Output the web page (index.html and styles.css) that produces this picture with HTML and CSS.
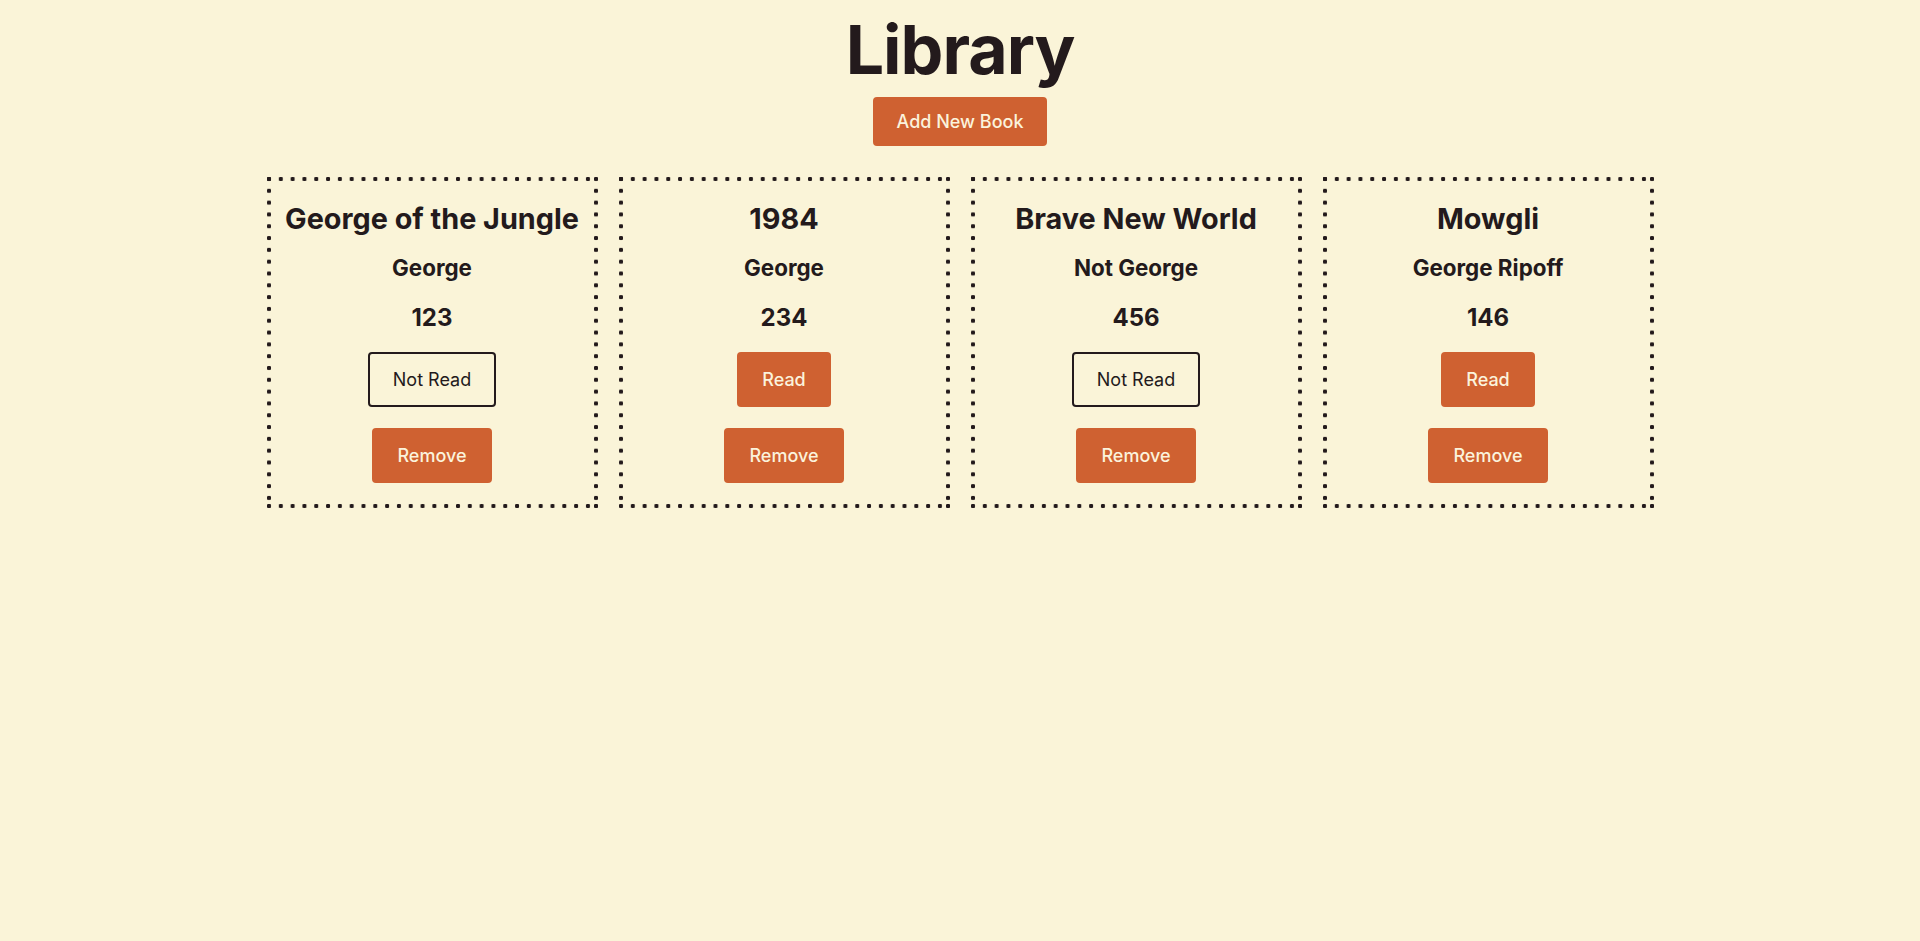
FILE: index.html
```html
<!DOCTYPE html>
<html lang="en">
<head>
<meta charset="utf-8">
<title>Library</title>
<link rel="stylesheet" href="styles.css">
</head>
<body>
<main class="page">
  <h1 class="title">Library</h1>
  <button class="btn btn-add">Add New Book</button>
  <section class="library">
    <article class="card">
      <h2 class="book-title">George of the Jungle</h2>
      <h3 class="book-author">George</h3>
      <p class="book-pages">123</p>
      <button class="btn btn-outline">Not Read</button>
      <button class="btn">Remove</button>
    </article>
    <article class="card">
      <h2 class="book-title">1984</h2>
      <h3 class="book-author">George</h3>
      <p class="book-pages">234</p>
      <button class="btn">Read</button>
      <button class="btn">Remove</button>
    </article>
    <article class="card">
      <h2 class="book-title">Brave New World</h2>
      <h3 class="book-author">Not George</h3>
      <p class="book-pages">456</p>
      <button class="btn btn-outline">Not Read</button>
      <button class="btn">Remove</button>
    </article>
    <article class="card">
      <h2 class="book-title">Mowgli</h2>
      <h3 class="book-author">George Ripoff</h3>
      <p class="book-pages">146</p>
      <button class="btn">Read</button>
      <button class="btn">Remove</button>
    </article>
  </section>
</main>
</body>
</html>
```

FILE: styles.css
```css
html, body {
  margin: 0;
  padding: 0;
  height: 100%;
}

body {
  background: #faf4d8;
  color: #231a1c;
  font-family: Inter, "Noto Sans", sans-serif;
}

.page {
  display: flex;
  flex-direction: column;
  align-items: center;
  padding-top: 8px;
}

.title {
  margin: 0;
  font-size: 68px;
  line-height: 82px;
  font-weight: 700;
  letter-spacing: -1px;
}

.btn {
  font-family: Inter, "Noto Sans", sans-serif;
  font-size: 18px;
  font-weight: 500;
  line-height: 21px;
  padding: 15px 23px;
  border: 2px solid #cf6131;
  border-radius: 4px;
  background: #cf6131;
  color: #fbf3dc;
  cursor: pointer;
}

.btn-add {
  margin-top: 7px;
  padding: 12px 22px;
}

.btn-outline {
  background: transparent;
  border-color: #231a1c;
  color: #231a1c;
  font-weight: 400;
}

.library {
  display: flex;
  gap: 21px;
  margin-top: 31px;
}

.card {
  --dot: radial-gradient(circle 2.5px at 2px 2px, #231a1c 78%, rgba(35, 26, 28, 0) 100%);
  box-sizing: border-box;
  width: 331px;
  height: 331px;
  border: 4px solid transparent;
  background:
    var(--dot) left top / 12px 4px round no-repeat border-box,
    var(--dot) left bottom / 12px 4px round no-repeat border-box,
    var(--dot) left top / 4px 12px no-repeat round border-box,
    var(--dot) right top / 4px 12px no-repeat round border-box,
    var(--dot) right bottom / 4px 4px no-repeat border-box;
  padding: 20px 8px 0;
  display: flex;
  flex-direction: column;
  align-items: center;
  text-align: center;
}

.book-title {
  margin: 0;
  font-size: 28.8px;
  line-height: 35px;
  font-weight: 700;
  white-space: nowrap;
}

.book-author {
  margin: 20px 0 0;
  font-size: 22.4px;
  line-height: 24px;
  font-weight: 700;
}

.book-pages {
  margin: 25px 0 0;
  font-size: 24px;
  line-height: 26px;
  font-weight: 700;
}

.card .btn {
  margin-top: 21px;
}
```
